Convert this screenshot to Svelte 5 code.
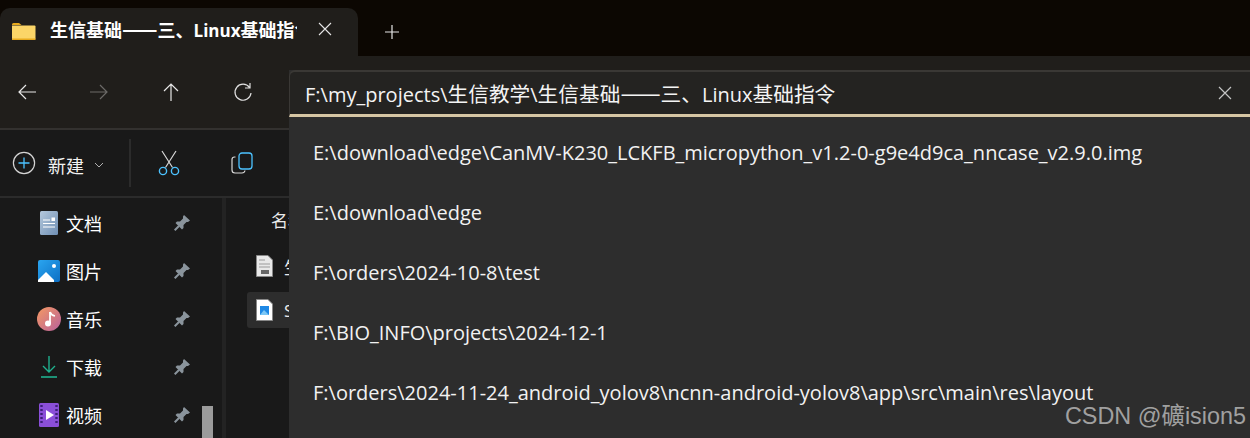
<script>
  const history = [
    'E:\\download\\edge\\CanMV-K230_LCKFB_micropython_v1.2-0-g9e4d9ca_nncase_v2.9.0.img',
    'E:\\download\\edge',
    'F:\\orders\\2024-10-8\\test',
    'F:\\BIO_INFO\\projects\\2024-12-1',
    'F:\\orders\\2024-11-24_android_yolov8\\ncnn-android-yolov8\\app\\src\\main\\res\\layout'
  ];
  const quick = [
    { name: '文档', icon: 'doc' },
    { name: '图片', icon: 'pic' },
    { name: '音乐', icon: 'music' },
    { name: '下载', icon: 'down' },
    { name: '视频', icon: 'video' }
  ];
</script>

<div class="window">
  <div class="titlebar">
    <div class="tab">
      <svg class="folder" width="24" height="20" viewBox="0 0 24 20">
        <path d="M0 2.5Q0 1 1.5 1H7L9.5 3H0Z" fill="#e8a91c" />
        <path d="M0 3.5H22.5Q23.5 3.5 23.5 4.5V17Q23.5 18 22.5 18H1Q0 18 0 17Z" fill="#fbd568" />
        <path d="M0 16.5H23.5V17Q23.5 18 22.5 18H1Q0 18 0 17Z" fill="#e8a91c" />
      </svg>
      <span class="tab-title"><span class="cjk">生信基础<span class="dash">——</span>三、</span>Linux<span class="cjk">基础指令</span></span>
      <svg class="tab-close" width="14" height="14" viewBox="0 0 14 14"><path d="M1 1L13 13M13 1L1 13" stroke="#e6e6e6" stroke-width="1.1" /></svg>
    </div>
    <svg class="new-tab" width="16" height="16" viewBox="0 0 16 16"><path d="M8 1V15M1 8H15" stroke="#e6e6e6" stroke-width="1.2" /></svg>
  </div>

  <div class="navbar">
    <svg class="nav" width="20" height="20" viewBox="0 0 20 20"><path d="M19 10H2M9 3L2 10L9 17" fill="none" stroke="#e8e8e8" stroke-width="1.2" /></svg>
    <svg class="nav" width="20" height="20" viewBox="0 0 20 20"><path d="M1 10H18M11 3L18 10L11 17" fill="none" stroke="#6c6a68" stroke-width="1.2" /></svg>
    <svg class="nav" width="20" height="20" viewBox="0 0 20 20"><path d="M10 19V2M3 9L10 2L17 9" fill="none" stroke="#e8e8e8" stroke-width="1.2" /></svg>
    <svg class="nav" width="20" height="20" viewBox="0 0 20 20"><path d="M16.5 5.5A8 8 0 1 0 18 11M17 1V6H12" fill="none" stroke="#e0e0e0" stroke-width="1.2" /></svg>
  </div>

  <div class="commandbar">
    <div class="new-btn">
      <svg width="24" height="24" viewBox="0 0 24 24">
        <circle cx="12" cy="12" r="10.6" fill="none" stroke="#d4d4d4" stroke-width="1.2" />
        <path d="M12 6.5V17.5M6.5 12H17.5" stroke="#4cc2ff" stroke-width="1.3" />
      </svg>
      <span>新建</span>
      <svg class="chevron" width="10" height="6" viewBox="0 0 10 6"><path d="M1 1L5 5L9 1" fill="none" stroke="#b0b0b0" stroke-width="1" /></svg>
    </div>
    <div class="divider"></div>
    <svg class="cmd" width="22" height="26" viewBox="0 0 22 26">
      <path d="M4 1L14.5 17.5M18 1L7.5 17.5" fill="none" stroke="#d8d8d8" stroke-width="1.2" />
      <circle cx="5" cy="21" r="3.6" fill="none" stroke="#4cc2ff" stroke-width="1.4" />
      <circle cx="17" cy="21" r="3.6" fill="none" stroke="#4cc2ff" stroke-width="1.4" />
    </svg>
    <svg class="cmd" width="22" height="22" viewBox="0 0 22 22">
      <path d="M4.5 5H3.5Q1 5 1 7.5V18Q1 21 4 21H11Q13.5 21 14 18.5" fill="none" stroke="#d8d8d8" stroke-width="1.2" />
      <rect x="8" y="1" width="13" height="16" rx="3" fill="none" stroke="#4cc2ff" stroke-width="1.3" />
    </svg>
  </div>

  <div class="body">
    <aside class="sidebar">
      {#each quick as item}
        <div class="quick">
          <span class="qicon">
            {#if item.icon === 'doc'}
              <svg width="18" height="24" viewBox="0 0 18 24">
                <defs><linearGradient id="docfill" x1="0" y1="0" x2="1" y2="1"><stop offset="0" stop-color="#b4c8dc" /><stop offset="1" stop-color="#6f8fb4" /></linearGradient></defs>
                <rect width="18" height="24" rx="1.5" fill="url(#docfill)" />
                <path d="M3 9H10M3 12.5H15M3 16H15" stroke="#fff" stroke-width="1" />
                <rect x="11.5" y="6.5" width="3.5" height="3.5" fill="#fff" />
              </svg>
            {:else if item.icon === 'pic'}
              <svg width="22" height="22" viewBox="0 0 22 22">
                <defs><linearGradient id="picfill" x1="0" y1="0" x2="1" y2="1"><stop offset="0" stop-color="#2aa5f0" /><stop offset="1" stop-color="#0c6fc4" /></linearGradient></defs>
                <rect width="22" height="22" rx="2" fill="url(#picfill)" />
                <path d="M0 20L8 12L16 20V22H0Z" fill="#fff" />
                <circle cx="16" cy="6" r="2" fill="#fff" />
              </svg>
            {:else if item.icon === 'music'}
              <svg width="24" height="24" viewBox="0 0 24 24">
                <defs><linearGradient id="musicfill" x1="0" y1="0" x2="1" y2="1"><stop offset="0" stop-color="#f59a62" /><stop offset="1" stop-color="#b8609c" /></linearGradient></defs>
                <circle cx="12" cy="12" r="12" fill="url(#musicfill)" />
                <path d="M13 5V16" stroke="#fff" stroke-width="1.8" />
                <path d="M13 5Q14 8 18 9" fill="none" stroke="#fff" stroke-width="1.8" />
                <circle cx="11" cy="16.5" r="3" fill="#fff" />
              </svg>
            {:else if item.icon === 'down'}
              <svg width="16" height="22" viewBox="0 0 16 22">
                <path d="M8 0V16M2 10L8 16L14 10" fill="none" stroke="#1fb08e" stroke-width="1.4" />
                <path d="M0 21H16" stroke="#1fb08e" stroke-width="1.6" />
              </svg>
            {:else}
              <svg width="20" height="24" viewBox="0 0 20 24">
                <rect width="20" height="24" rx="1.5" fill="#8a4fd8" />
                <path d="M7 7V17L15 12Z" fill="#fff" />
                <path d="M2.5 2V22M17.5 2V22" stroke="#3c1f78" stroke-width="2.4" stroke-dasharray="2 2" />
              </svg>
            {/if}
          </span>
          <span class="qname">{item.name}</span>
          <svg class="pin" width="16" height="16" viewBox="0 0 16 16">
            <path d="M10 0L16 5.5L14 7L12.5 7L9.5 10L9.5 13L8 14.5L1.5 8L3 6.5L6 6.5L9 3.5L9 1.5Z" fill="#8a949c" />
            <path d="M5 11L0.7 15.3" stroke="#8a949c" stroke-width="2" />
          </svg>
        </div>
      {/each}
      <div class="scrollthumb"></div>
    </aside>
    <main class="files">
      <div class="head">名称</div>
      <div class="file">
        <svg width="17" height="22" viewBox="0 0 17 22">
          <path d="M0.5 0.5H12L16.5 5V21.5H0.5Z" fill="#e8e8e8" stroke="#888" />
          <path d="M3 5H9M3 9H14M3 12H14" stroke="#999" stroke-width="1.2" />
          <rect x="5" y="15" width="8" height="4" fill="#666" />
        </svg>
        <span>生信基础.md</span>
      </div>
      <div class="file selected">
        <svg width="17" height="22" viewBox="0 0 17 22">
          <path d="M0.5 0.5H12L16.5 5V21.5H0.5Z" fill="#fff" stroke="#888" />
          <rect x="4" y="7" width="9" height="9" fill="#1e88e5" />
          <path d="M4 16L8 11L13 16Z" fill="#7cc7f5" />
        </svg>
        <span>Snipaste.png</span>
      </div>
    </main>
  </div>

  <div class="address">
    <div class="address-input">
      <span>F:\my_projects\<span class="cjk">生信教学</span>\<span class="cjk">生信基础<span class="dash">——</span>三、</span>Linux<span class="cjk">基础指令</span></span>
      <svg width="14" height="14" viewBox="0 0 14 14"><path d="M1 1L13 13M13 1L1 13" stroke="#c4c4c4" stroke-width="1.2" /></svg>
    </div>
    <ul class="history">
      {#each history as path}
        <li>{path}</li>
      {/each}
    </ul>
  </div>

  <div class="watermark">CSDN @礦ision5</div>
</div>

<style>
  :global(body) {
    margin: 0;
    background: #0c0702;
  }

  .window {
    position: relative;
    width: 1250px;
    height: 438px;
    overflow: hidden;
    display: flex;
    flex-direction: column;
    font-family: "Open Sans", "Noto Sans CJK SC", sans-serif;
    color: #fff;
  }

  .cjk {
    font-family: "Noto Sans CJK SC", sans-serif;
    font-size: 1.035em;
  }

  .dash {
    font-size: 1.16em;
    line-height: 1;
  }

  .titlebar {
    height: 56px;
    flex: none;
    display: flex;
    align-items: flex-end;
    box-sizing: border-box;
    padding-top: 8px;
  }

  .tab {
    width: 358px;
    height: 48px;
    background: #201e1b;
    border-radius: 10px 10px 0 0;
    display: flex;
    align-items: center;
    box-sizing: border-box;
    padding: 0 0 6px 12px;
  }

  .folder {
    margin-top: 6px;
  }

  .tab-title {
    width: 247px;
    margin-left: 14px;
    overflow: hidden;
    white-space: nowrap;
    font-size: 17px;
    font-weight: 700;
  }

  .tab-title .cjk {
    font-size: 18px;
  }

  .tab-close {
    margin-left: 21px;
  }

  .new-tab {
    margin: 0 0 16px 26px;
  }

  .navbar {
    height: 72px;
    flex: none;
    background: #201e1b;
    display: flex;
    align-items: center;
    gap: 52px;
    padding: 0 0 0 17px;
    box-sizing: border-box;
  }

  .commandbar {
    height: 70px;
    flex: none;
    background: #191919;
    border-top: 2px solid #33312f;
    border-bottom: 2px solid #2b2b2b;
    box-sizing: border-box;
    display: flex;
    align-items: center;
    padding-left: 12px;
  }

  .new-btn {
    display: flex;
    align-items: center;
    font-size: 18px;
    color: #f2f2f2;
  }

  .new-btn span {
    margin: 4px 10px 0 12px;
  }

  .chevron {
    margin-top: 4px;
  }

  .divider {
    width: 2px;
    height: 48px;
    background: #2b2b2b;
    margin: 0 27px 0 25px;
  }

  .cmd + .cmd {
    margin-left: 51px;
  }

  .body {
    flex: 1;
    min-height: 0;
    display: flex;
    background: #191919;
  }

  .sidebar {
    position: relative;
    width: 226px;
    flex: none;
    box-sizing: border-box;
    padding-top: 1px;
    border-right: 4px solid #232323;
  }

  .quick {
    height: 48px;
    display: flex;
    align-items: center;
    font-size: 18px;
  }

  .qicon {
    width: 24px;
    margin-left: 37px;
    display: flex;
    justify-content: center;
  }

  .qname {
    margin-left: 5px;
    width: 108px;
  }

  .pin {
    flex: none;
  }

  .scrollthumb {
    position: absolute;
    left: 202px;
    top: 208px;
    width: 11px;
    height: 40px;
    background: #9b9b9b;
  }

  .files {
    flex: 1;
    padding-left: 21px;
    font-size: 17px;
    color: #eaeaea;
  }

  .head {
    height: 46px;
    line-height: 46px;
    padding-left: 24px;
  }

  .file {
    height: 36px;
    margin-top: 4px;
    display: flex;
    align-items: center;
    gap: 11px;
    padding-left: 9px;
    white-space: nowrap;
  }

  .file.selected {
    background: #2d2d2d;
    margin-top: 8px;
    border-radius: 3px;
  }

  .address {
    position: absolute;
    left: 289px;
    top: 70px;
    right: 0;
    bottom: 0;
    background: #2d2d2d;
  }

  .address-input {
    height: 47px;
    box-sizing: border-box;
    background: #242321;
    border-top: 2px solid #3a3835;
    border-left: 1px solid #3a3835;
    border-bottom: 3px solid #d6c6a4;
    border-top-left-radius: 6px;
    display: flex;
    align-items: center;
    justify-content: space-between;
    padding: 0 18px 0 15px;
    font-size: 20px;
    white-space: nowrap;
    color: #f4f4f4;
  }

  .history {
    list-style: none;
    margin: 0;
    padding: 6px 0 0 24px;
    font-size: 20px;
    color: #f2f2f2;
  }

  .history li {
    height: 60px;
    line-height: 60px;
    white-space: nowrap;
  }

  .watermark {
    position: absolute;
    right: 4px;
    bottom: 7px;
    font-family: "Liberation Sans", "Noto Sans CJK SC", sans-serif;
    font-size: 23.4px;
    color: #a0a0a0;
  }
</style>
